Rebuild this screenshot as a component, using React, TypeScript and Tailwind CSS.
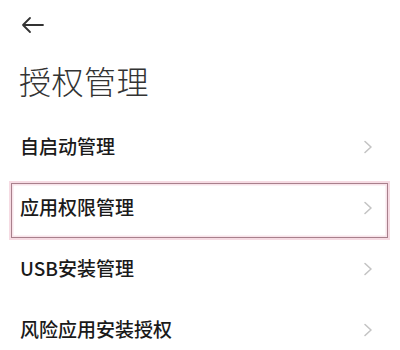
import React from 'react';

const ROWS = ['自启动管理', '应用权限管理', 'USB安装管理', '风险应用安装授权'];

function Chevron() {
  return (
    <svg width="10" height="14" viewBox="0 0 10 14" fill="none" className="shrink-0">
      <polyline points="2,1.5 8,7 2,12.5" stroke="#c4c4c4" strokeWidth="1.6" strokeLinecap="round" strokeLinejoin="round" />
    </svg>
  );
}

export default function App() {
  return (
    <div
      className="w-[400px] h-[350px] overflow-hidden bg-white"
      style={{ fontFamily: '"Noto Sans CJK SC", "Noto Sans", sans-serif' }}
    >
      <div className="pt-[14px] pl-[21px] h-[36px]">
        <svg width="24" height="22" viewBox="0 0 24 22" fill="none">
          <path d="M2 11 H22 M9 4 L2 11 L9 18" stroke="#333" strokeWidth="1.8" strokeLinecap="round" strokeLinejoin="round" />
        </svg>
      </div>

      <h1 className="mt-[24px] mb-[16px] pl-[19px] text-[32px] leading-[40px] font-light text-[#333] tracking-[0.5px]">
        授权管理
      </h1>

      <div className="flex flex-col">
        {ROWS.map((label, i) => (
          <div key={label} className="relative h-[61px] flex items-center justify-between pl-[20px] pr-[27px]">
            <span className="text-[19px] font-medium text-[#1a1a1a]">{label}</span>
            <Chevron />
            {i === 1 && (
              <span className="absolute left-[11px] right-[12px] top-[6px] bottom-0 border-[1.5px] border-[#a8808c] shadow-[0_0_0_2px_#f6dbe3,inset_0_0_0_1.5px_#f8e3ea]" />
            )}
          </div>
        ))}
      </div>
    </div>
  );
}
